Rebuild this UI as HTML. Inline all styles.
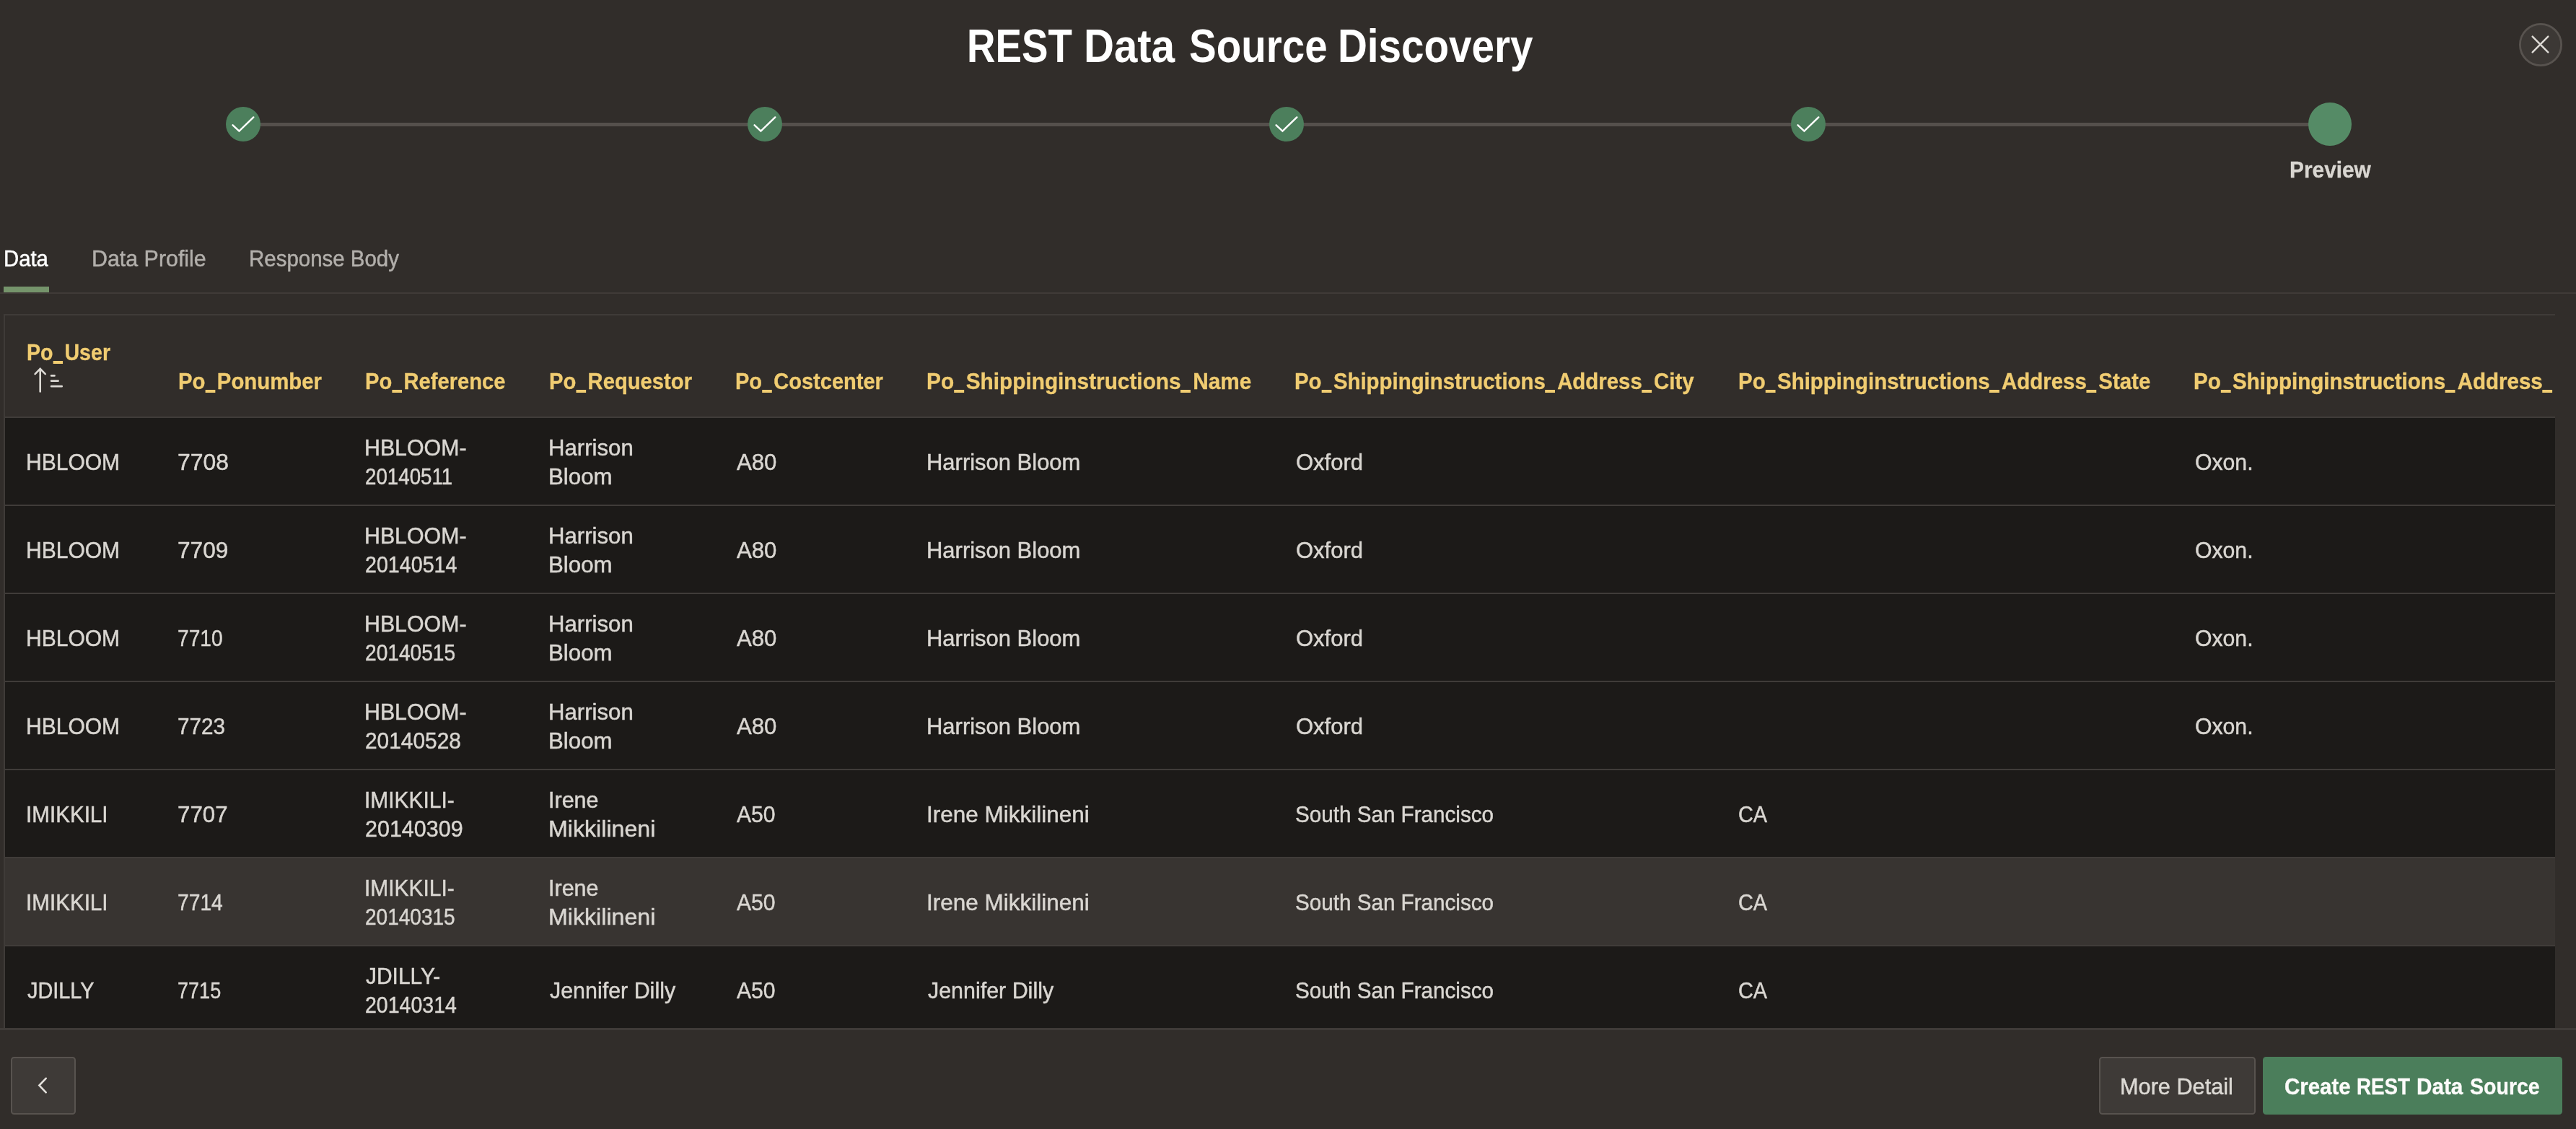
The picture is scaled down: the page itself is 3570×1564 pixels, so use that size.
<!DOCTYPE html>
<html><head><meta charset="utf-8"><style>
html,body{margin:0;padding:0;}
body{width:3570px;height:1564px;overflow:hidden;background:#312d2a;position:relative;font-family:"Liberation Sans",sans-serif;}
.t{position:absolute;white-space:nowrap;transform-origin:0 0;-webkit-text-stroke:0.5px currentColor;}
.t.b{-webkit-text-stroke:0.35px currentColor;}
.t.ns{-webkit-text-stroke:0;}
.us{display:inline-block;width:17.79px;height:0;position:relative;}
.us:after{content:'';position:absolute;left:-0.2px;right:3px;top:0.8px;height:4px;background:currentColor;}
</style></head><body>
<div style="position:absolute;left:337px;top:170px;width:2892px;height:5px;background:#55504c"></div>
<svg width="48" height="48" viewBox="0 0 48 48" style="position:absolute;left:313px;top:148px"><circle cx="24" cy="24" r="24" fill="#4c7f5c"/><path d="M9.6 25.3 L18.4 33.6 L38.3 14.4" fill="none" stroke="#ffffff" stroke-width="2.4" stroke-linecap="round" stroke-linejoin="miter"/></svg><svg width="48" height="48" viewBox="0 0 48 48" style="position:absolute;left:1036px;top:148px"><circle cx="24" cy="24" r="24" fill="#4c7f5c"/><path d="M9.6 25.3 L18.4 33.6 L38.3 14.4" fill="none" stroke="#ffffff" stroke-width="2.4" stroke-linecap="round" stroke-linejoin="miter"/></svg><svg width="48" height="48" viewBox="0 0 48 48" style="position:absolute;left:1759px;top:148px"><circle cx="24" cy="24" r="24" fill="#4c7f5c"/><path d="M9.6 25.3 L18.4 33.6 L38.3 14.4" fill="none" stroke="#ffffff" stroke-width="2.4" stroke-linecap="round" stroke-linejoin="miter"/></svg><svg width="48" height="48" viewBox="0 0 48 48" style="position:absolute;left:2482px;top:148px"><circle cx="24" cy="24" r="24" fill="#4c7f5c"/><path d="M9.6 25.3 L18.4 33.6 L38.3 14.4" fill="none" stroke="#ffffff" stroke-width="2.4" stroke-linecap="round" stroke-linejoin="miter"/></svg>
<div style="position:absolute;left:3199px;top:142px;width:60px;height:60px;border-radius:50%;background:#558b66"></div>
<svg width="60" height="60" viewBox="0 0 60 60" style="position:absolute;left:3491px;top:32px"><circle cx="30" cy="30" r="28.6" fill="#3c3835" stroke="#58534f" stroke-width="2.8"/><path d="M18.7 18.7 L40.3 40.3 M40.3 18.7 L18.7 40.3" stroke="#dedbd6" stroke-width="2.5" stroke-linecap="round"/></svg>
<div style="position:absolute;left:0;top:405px;width:3570px;height:2px;background:#403b38"></div>
<div style="position:absolute;left:5px;top:397px;width:63px;height:8px;background:#75946b"></div>
<div style="position:absolute;left:5px;top:435px;width:3536px;height:989px;background:#312d2a;border:2px solid #3f3b38;border-right:none;border-bottom:none;box-sizing:border-box"></div>
<div style="position:absolute;left:7px;top:577px;width:3534px;height:2px;background:#403c39"></div>
<div style="position:absolute;left:7px;top:579px;width:3534px;height:120px;background:#1c1a18"></div><div style="position:absolute;left:7px;top:699px;width:3534px;height:2px;background:#403c39"></div><div style="position:absolute;left:7px;top:701px;width:3534px;height:120px;background:#1c1a18"></div><div style="position:absolute;left:7px;top:821px;width:3534px;height:2px;background:#403c39"></div><div style="position:absolute;left:7px;top:823px;width:3534px;height:120px;background:#1c1a18"></div><div style="position:absolute;left:7px;top:943px;width:3534px;height:2px;background:#403c39"></div><div style="position:absolute;left:7px;top:945px;width:3534px;height:120px;background:#1c1a18"></div><div style="position:absolute;left:7px;top:1065px;width:3534px;height:2px;background:#403c39"></div><div style="position:absolute;left:7px;top:1067px;width:3534px;height:120px;background:#1c1a18"></div><div style="position:absolute;left:7px;top:1187px;width:3534px;height:2px;background:#403c39"></div><div style="position:absolute;left:7px;top:1189px;width:3534px;height:120px;background:#383431"></div><div style="position:absolute;left:7px;top:1309px;width:3534px;height:2px;background:#403c39"></div><div style="position:absolute;left:7px;top:1311px;width:3534px;height:120px;background:#1c1a18"></div><div style="position:absolute;left:7px;top:1431px;width:3534px;height:2px;background:#403c39"></div>
<div style="position:absolute;left:0;top:1424px;width:3570px;height:140px;background:#312d2a"></div>
<div style="position:absolute;left:0;top:1424px;width:3570px;height:3px;background:#3f3b38"></div>
<svg width="50" height="40" viewBox="0 0 50 40" style="position:absolute;left:40px;top:505px"><path d="M15.7 5.8 L15.7 37.4 M8.6 13.1 L15.7 5.9 L22.8 13.1" fill="none" stroke="#dcd9d4" stroke-width="2.6" stroke-linecap="round"/><path d="M31.1 15.4 L35.5 15.4 M31.1 22.7 L40.6 22.7 M31.1 30.2 L45.7 30.2" fill="none" stroke="#dcd9d4" stroke-width="2.7" stroke-linecap="round"/></svg>
<div style="position:absolute;left:15px;top:1464px;width:90px;height:80px;box-sizing:border-box;border:2px solid #58534f;border-radius:4.5px;background:#3e3a37"></div>
<svg width="90" height="80" viewBox="0 0 90 80" style="position:absolute;left:15px;top:1464px"><path d="M48.7 29.8 L39.4 39.6 L48.7 49.4" fill="none" stroke="#e4e1dc" stroke-width="2.6" stroke-linecap="round" stroke-linejoin="miter"/></svg>
<div style="position:absolute;left:2909px;top:1464px;width:217px;height:80px;box-sizing:border-box;border:2px solid #58534f;border-radius:4.5px;background:#3e3a37"></div>
<div style="position:absolute;left:3136px;top:1464px;width:415px;height:80px;border-radius:4.5px;background:#4b7e5b"></div>
<div style="position:absolute;left:0;top:0;width:3570px;height:1564px;pointer-events:none;will-change:transform">
<div class="t b ns" style="left:1340.23px;top:31.46px;font-size:65px;line-height:65px;color:#ffffff;font-weight:bold;transform:scaleX(0.8414);">REST</div><div class="t b ns" style="left:1502.02px;top:31.46px;font-size:65px;line-height:65px;color:#ffffff;font-weight:bold;transform:scaleX(0.8942);">Data</div><div class="t b ns" style="left:1647.76px;top:31.46px;font-size:65px;line-height:65px;color:#ffffff;font-weight:bold;transform:scaleX(0.8694);">Source</div><div class="t b ns" style="left:1854.02px;top:31.46px;font-size:65px;line-height:65px;color:#ffffff;font-weight:bold;transform:scaleX(0.8707);">Discovery</div><div class="t b" style="left:3172.63px;top:218.90px;font-size:32px;line-height:32px;color:#d9d6d1;font-weight:bold;transform:scaleX(0.9328);">Preview</div><div class="t" style="left:4.50px;top:342.00px;font-size:32px;line-height:32px;color:#ffffff;transform:scaleX(0.9154);">Data</div><div class="t" style="left:127.45px;top:341.50px;font-size:32px;line-height:32px;color:#b2afab;transform:scaleX(0.9494);">Data Profile</div><div class="t" style="left:345.44px;top:341.50px;font-size:32px;line-height:32px;color:#b2afab;transform:scaleX(0.9206);">Response Body</div><div class="t b" style="left:37.11px;top:472.20px;font-size:32px;line-height:32px;color:#f0cc71;font-weight:bold;transform:scaleX(0.8937);">Po<span class="us"></span>User</div><div class="t b" style="left:246.87px;top:512.10px;font-size:32px;line-height:32px;color:#f0cc71;font-weight:bold;transform:scaleX(0.9173);">Po<span class="us"></span>Ponumber</div><div class="t b" style="left:506.38px;top:512.10px;font-size:32px;line-height:32px;color:#f0cc71;font-weight:bold;transform:scaleX(0.9114);">Po<span class="us"></span>Reference</div><div class="t b" style="left:760.77px;top:512.10px;font-size:32px;line-height:32px;color:#f0cc71;font-weight:bold;transform:scaleX(0.9131);">Po<span class="us"></span>Requestor</div><div class="t b" style="left:1019.39px;top:512.10px;font-size:32px;line-height:32px;color:#f0cc71;font-weight:bold;transform:scaleX(0.9072);">Po<span class="us"></span>Costcenter</div><div class="t b" style="left:1284.44px;top:512.10px;font-size:32px;line-height:32px;color:#f0cc71;font-weight:bold;transform:scaleX(0.9312);">Po<span class="us"></span>Shippinginstructions<span class="us"></span>Name</div><div class="t b" style="left:1794.46px;top:512.10px;font-size:32px;line-height:32px;color:#f0cc71;font-weight:bold;transform:scaleX(0.9185);">Po<span class="us"></span>Shippinginstructions<span class="us"></span>Address<span class="us"></span>City</div><div class="t b" style="left:2409.16px;top:512.10px;font-size:32px;line-height:32px;color:#f0cc71;font-weight:bold;transform:scaleX(0.9207);">Po<span class="us"></span>Shippinginstructions<span class="us"></span>Address<span class="us"></span>State</div><div style="position:absolute;left:0;top:0;width:3541px;height:600px;overflow:hidden"><div class="t" style="left:3040.36px;top:512.10px;font-size:32px;line-height:32px;color:#f0cc71;font-weight:bold;transform:scaleX(0.9223);">Po<span class="us"></span>Shippinginstructions<span class="us"></span>Address<span class="us"></span>Country</div></div><div class="t" style="left:35.98px;top:623.90px;font-size:32px;line-height:32px;color:#d9d6d1;transform:scaleX(0.9383);">HBLOOM</div><div class="t" style="left:246.01px;top:623.90px;font-size:32px;line-height:32px;color:#d9d6d1;transform:scaleX(0.9970);">7708</div><div class="t" style="left:505.16px;top:603.90px;font-size:32px;line-height:32px;color:#d9d6d1;transform:scaleX(0.9476);">HBLOOM-</div><div class="t" style="left:506.27px;top:643.90px;font-size:32px;line-height:32px;color:#d9d6d1;transform:scaleX(0.8662);">20140511</div><div class="t" style="left:760.38px;top:603.90px;font-size:32px;line-height:32px;color:#d9d6d1;transform:scaleX(0.9741);">Harrison</div><div class="t" style="left:760.37px;top:643.90px;font-size:32px;line-height:32px;color:#d9d6d1;transform:scaleX(0.9767);">Bloom</div><div class="t" style="left:1020.50px;top:623.90px;font-size:32px;line-height:32px;color:#d9d6d1;transform:scaleX(0.9732);">A80</div><div class="t" style="left:1283.60px;top:623.90px;font-size:32px;line-height:32px;color:#d9d6d1;transform:scaleX(0.9676);">Harrison Bloom</div><div class="t" style="left:1795.53px;top:623.90px;font-size:32px;line-height:32px;color:#d9d6d1;transform:scaleX(0.9677);">Oxford</div><div class="t" style="left:3041.56px;top:623.90px;font-size:32px;line-height:32px;color:#d9d6d1;transform:scaleX(0.9432);">Oxon.</div><div class="t" style="left:35.98px;top:745.90px;font-size:32px;line-height:32px;color:#d9d6d1;transform:scaleX(0.9383);">HBLOOM</div><div class="t" style="left:246.02px;top:745.90px;font-size:32px;line-height:32px;color:#d9d6d1;transform:scaleX(0.9896);">7709</div><div class="t" style="left:505.16px;top:725.90px;font-size:32px;line-height:32px;color:#d9d6d1;transform:scaleX(0.9476);">HBLOOM-</div><div class="t" style="left:506.21px;top:765.90px;font-size:32px;line-height:32px;color:#d9d6d1;transform:scaleX(0.8950);">20140514</div><div class="t" style="left:760.38px;top:725.90px;font-size:32px;line-height:32px;color:#d9d6d1;transform:scaleX(0.9741);">Harrison</div><div class="t" style="left:760.37px;top:765.90px;font-size:32px;line-height:32px;color:#d9d6d1;transform:scaleX(0.9767);">Bloom</div><div class="t" style="left:1020.50px;top:745.90px;font-size:32px;line-height:32px;color:#d9d6d1;transform:scaleX(0.9732);">A80</div><div class="t" style="left:1283.60px;top:745.90px;font-size:32px;line-height:32px;color:#d9d6d1;transform:scaleX(0.9676);">Harrison Bloom</div><div class="t" style="left:1795.53px;top:745.90px;font-size:32px;line-height:32px;color:#d9d6d1;transform:scaleX(0.9677);">Oxford</div><div class="t" style="left:3041.56px;top:745.90px;font-size:32px;line-height:32px;color:#d9d6d1;transform:scaleX(0.9432);">Oxon.</div><div class="t" style="left:35.98px;top:867.90px;font-size:32px;line-height:32px;color:#d9d6d1;transform:scaleX(0.9383);">HBLOOM</div><div class="t" style="left:246.24px;top:867.90px;font-size:32px;line-height:32px;color:#d9d6d1;transform:scaleX(0.8794);">7710</div><div class="t" style="left:505.16px;top:847.90px;font-size:32px;line-height:32px;color:#d9d6d1;transform:scaleX(0.9476);">HBLOOM-</div><div class="t" style="left:506.24px;top:887.90px;font-size:32px;line-height:32px;color:#d9d6d1;transform:scaleX(0.8786);">20140515</div><div class="t" style="left:760.38px;top:847.90px;font-size:32px;line-height:32px;color:#d9d6d1;transform:scaleX(0.9741);">Harrison</div><div class="t" style="left:760.37px;top:887.90px;font-size:32px;line-height:32px;color:#d9d6d1;transform:scaleX(0.9767);">Bloom</div><div class="t" style="left:1020.50px;top:867.90px;font-size:32px;line-height:32px;color:#d9d6d1;transform:scaleX(0.9732);">A80</div><div class="t" style="left:1283.60px;top:867.90px;font-size:32px;line-height:32px;color:#d9d6d1;transform:scaleX(0.9676);">Harrison Bloom</div><div class="t" style="left:1795.53px;top:867.90px;font-size:32px;line-height:32px;color:#d9d6d1;transform:scaleX(0.9677);">Oxford</div><div class="t" style="left:3041.56px;top:867.90px;font-size:32px;line-height:32px;color:#d9d6d1;transform:scaleX(0.9432);">Oxon.</div><div class="t" style="left:35.98px;top:989.90px;font-size:32px;line-height:32px;color:#d9d6d1;transform:scaleX(0.9383);">HBLOOM</div><div class="t" style="left:246.14px;top:989.90px;font-size:32px;line-height:32px;color:#d9d6d1;transform:scaleX(0.9284);">7723</div><div class="t" style="left:505.16px;top:969.90px;font-size:32px;line-height:32px;color:#d9d6d1;transform:scaleX(0.9476);">HBLOOM-</div><div class="t" style="left:506.13px;top:1009.90px;font-size:32px;line-height:32px;color:#d9d6d1;transform:scaleX(0.9331);">20140528</div><div class="t" style="left:760.38px;top:969.90px;font-size:32px;line-height:32px;color:#d9d6d1;transform:scaleX(0.9741);">Harrison</div><div class="t" style="left:760.37px;top:1009.90px;font-size:32px;line-height:32px;color:#d9d6d1;transform:scaleX(0.9767);">Bloom</div><div class="t" style="left:1020.50px;top:989.90px;font-size:32px;line-height:32px;color:#d9d6d1;transform:scaleX(0.9732);">A80</div><div class="t" style="left:1283.60px;top:989.90px;font-size:32px;line-height:32px;color:#d9d6d1;transform:scaleX(0.9676);">Harrison Bloom</div><div class="t" style="left:1795.53px;top:989.90px;font-size:32px;line-height:32px;color:#d9d6d1;transform:scaleX(0.9677);">Oxford</div><div class="t" style="left:3041.56px;top:989.90px;font-size:32px;line-height:32px;color:#d9d6d1;transform:scaleX(0.9432);">Oxon.</div><div class="t" style="left:36.02px;top:1111.90px;font-size:32px;line-height:32px;color:#d9d6d1;transform:scaleX(0.9256);">IMIKKILI</div><div class="t" style="left:246.04px;top:1111.90px;font-size:32px;line-height:32px;color:#d9d6d1;transform:scaleX(0.9776);">7707</div><div class="t" style="left:505.19px;top:1091.90px;font-size:32px;line-height:32px;color:#d9d6d1;transform:scaleX(0.9357);">IMIKKILI-</div><div class="t" style="left:506.09px;top:1131.90px;font-size:32px;line-height:32px;color:#d9d6d1;transform:scaleX(0.9525);">20140309</div><div class="t" style="left:760.44px;top:1091.90px;font-size:32px;line-height:32px;color:#d9d6d1;transform:scaleX(0.9529);">Irene</div><div class="t" style="left:760.29px;top:1131.90px;font-size:32px;line-height:32px;color:#d9d6d1;transform:scaleX(1.0049);">Mikkilineni</div><div class="t" style="left:1020.50px;top:1111.90px;font-size:32px;line-height:32px;color:#d9d6d1;transform:scaleX(0.9411);">A50</div><div class="t" style="left:1283.55px;top:1111.90px;font-size:32px;line-height:32px;color:#d9d6d1;transform:scaleX(0.9835);">Irene Mikkilineni</div><div class="t" style="left:1794.65px;top:1111.90px;font-size:32px;line-height:32px;color:#d9d6d1;transform:scaleX(0.9259);">South San Francisco</div><div class="t" style="left:2408.90px;top:1111.90px;font-size:32px;line-height:32px;color:#d9d6d1;transform:scaleX(0.9024);">CA</div><div class="t" style="left:36.02px;top:1233.90px;font-size:32px;line-height:32px;color:#d9d6d1;transform:scaleX(0.9256);">IMIKKILI</div><div class="t" style="left:246.24px;top:1233.90px;font-size:32px;line-height:32px;color:#d9d6d1;transform:scaleX(0.8824);">7714</div><div class="t" style="left:505.19px;top:1213.90px;font-size:32px;line-height:32px;color:#d9d6d1;transform:scaleX(0.9357);">IMIKKILI-</div><div class="t" style="left:506.25px;top:1253.90px;font-size:32px;line-height:32px;color:#d9d6d1;transform:scaleX(0.8757);">20140315</div><div class="t" style="left:760.44px;top:1213.90px;font-size:32px;line-height:32px;color:#d9d6d1;transform:scaleX(0.9529);">Irene</div><div class="t" style="left:760.29px;top:1253.90px;font-size:32px;line-height:32px;color:#d9d6d1;transform:scaleX(1.0049);">Mikkilineni</div><div class="t" style="left:1020.50px;top:1233.90px;font-size:32px;line-height:32px;color:#d9d6d1;transform:scaleX(0.9411);">A50</div><div class="t" style="left:1283.55px;top:1233.90px;font-size:32px;line-height:32px;color:#d9d6d1;transform:scaleX(0.9835);">Irene Mikkilineni</div><div class="t" style="left:1794.65px;top:1233.90px;font-size:32px;line-height:32px;color:#d9d6d1;transform:scaleX(0.9259);">South San Francisco</div><div class="t" style="left:2408.90px;top:1233.90px;font-size:32px;line-height:32px;color:#d9d6d1;transform:scaleX(0.9024);">CA</div><div class="t" style="left:37.90px;top:1355.90px;font-size:32px;line-height:32px;color:#d9d6d1;transform:scaleX(0.9020);">JDILLY</div><div class="t" style="left:246.31px;top:1355.90px;font-size:32px;line-height:32px;color:#d9d6d1;transform:scaleX(0.8456);">7715</div><div class="t" style="left:507.06px;top:1335.90px;font-size:32px;line-height:32px;color:#d9d6d1;transform:scaleX(0.9352);">JDILLY-</div><div class="t" style="left:506.22px;top:1375.90px;font-size:32px;line-height:32px;color:#d9d6d1;transform:scaleX(0.8914);">20140314</div><div class="t" style="left:762.35px;top:1355.90px;font-size:32px;line-height:32px;color:#d9d6d1;transform:scaleX(0.9505);">Jennifer Dilly</div><div class="t" style="left:1020.50px;top:1355.90px;font-size:32px;line-height:32px;color:#d9d6d1;transform:scaleX(0.9411);">A50</div><div class="t" style="left:1285.55px;top:1355.90px;font-size:32px;line-height:32px;color:#d9d6d1;transform:scaleX(0.9505);">Jennifer Dilly</div><div class="t" style="left:1794.65px;top:1355.90px;font-size:32px;line-height:32px;color:#d9d6d1;transform:scaleX(0.9259);">South San Francisco</div><div class="t" style="left:2408.90px;top:1355.90px;font-size:32px;line-height:32px;color:#d9d6d1;transform:scaleX(0.9024);">CA</div><div class="t" style="left:2938.12px;top:1489.00px;font-size:32px;line-height:32px;color:#dddad5;transform:scaleX(0.9591);">More Detail</div><div class="t b" style="left:3166.38px;top:1489.30px;font-size:32px;line-height:32px;color:#fcfbfa;font-weight:bold;transform:scaleX(0.9204);">Create</div><div class="t b" style="left:3266.37px;top:1489.30px;font-size:32px;line-height:32px;color:#fcfbfa;font-weight:bold;transform:scaleX(0.8663);">REST</div><div class="t b" style="left:3348.94px;top:1489.30px;font-size:32px;line-height:32px;color:#fcfbfa;font-weight:bold;transform:scaleX(0.9279);">Data</div><div class="t b" style="left:3423.21px;top:1489.30px;font-size:32px;line-height:32px;color:#fcfbfa;font-weight:bold;transform:scaleX(0.8916);">Source</div>
</div>
</body></html>
